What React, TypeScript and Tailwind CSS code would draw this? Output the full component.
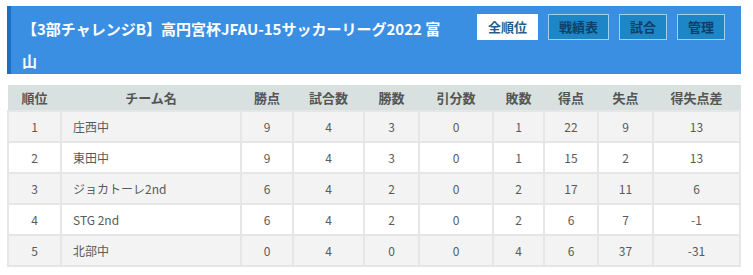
const font = { fontFamily: '"Noto Sans CJK JP", "Noto Sans", sans-serif' };

type Row = {
  rank: number;
  name: string;
  pts: number;
  played: number;
  win: number;
  draw: number;
  lose: number;
  gf: number;
  ga: number;
  diff: number;
};

const rows: Row[] = [
  { rank: 1, name: "庄西中", pts: 9, played: 4, win: 3, draw: 0, lose: 1, gf: 22, ga: 9, diff: 13 },
  { rank: 2, name: "東田中", pts: 9, played: 4, win: 3, draw: 0, lose: 1, gf: 15, ga: 2, diff: 13 },
  { rank: 3, name: "ジョカトーレ2nd", pts: 6, played: 4, win: 2, draw: 0, lose: 2, gf: 17, ga: 11, diff: 6 },
  { rank: 4, name: "STG 2nd", pts: 6, played: 4, win: 2, draw: 0, lose: 2, gf: 6, ga: 7, diff: -1 },
  { rank: 5, name: "北部中", pts: 0, played: 4, win: 0, draw: 0, lose: 4, gf: 6, ga: 37, diff: -31 },
];

const headers = [
  { label: "順位", w: "w-[53px]" },
  { label: "チーム名", w: "w-[180px]" },
  { label: "勝点", w: "w-[52px]" },
  { label: "試合数", w: "w-[71px]" },
  { label: "勝数", w: "w-[55px]" },
  { label: "引分数", w: "w-[74px]" },
  { label: "敗数", w: "w-[51px]" },
  { label: "得点", w: "w-[54px]" },
  { label: "失点", w: "w-[55px]" },
  { label: "得失点差", w: "" },
];

const buttons = ["全順位", "戦績表", "試合", "管理"];

export default function App() {
  return (
    <div className="w-[753px] h-[275px] bg-white pt-[6px]" style={font}>
      <div className="ml-[7px] w-[734px] h-[68px] bg-[#3b8fe3] border-l-[4px] border-[#1c6fc4] flex justify-between pl-[11px] pr-[16px]">
        <h1 className="w-[425px] pt-[7px] text-[15px] leading-[32px] font-bold text-white">
          【3部チャレンジB】高円宮杯JFAU-15サッカーリーグ2022 富山
        </h1>
        <div className="flex gap-[10px] pt-[8px] h-fit">
          {buttons.map((b, i) => (
            <button
              key={b}
              className={
                i === 0
                  ? "h-[26px] px-[10px] text-[13px] font-bold bg-white text-[#1f5f8f] border border-white"
                  : "h-[26px] px-[10px] text-[13px] font-bold bg-[#1d86c6] text-[#0f3f66] border border-[#9fd0ee]"
              }
            >
              {b}
            </button>
          ))}
        </div>
      </div>

      <table className="ml-[7px] mt-[11px] w-[734px] border-collapse text-[12px] text-[#5a5a5a]">
        <thead>
          <tr className="bg-[#d8e1e0] h-[26px]">
            {headers.map((h) => (
              <th
                key={h.label}
                className={`${h.w} text-[13px] font-bold text-[#555] text-center border-x border-[#d8e1e0]`}
              >
                {h.label}
              </th>
            ))}
          </tr>
        </thead>
        <tbody>
          {rows.map((r, i) => (
            <tr
              key={r.rank}
              className={`h-[31px] ${i % 2 === 0 ? "bg-[#f3f3f3]" : "bg-white"}`}
            >
              <td className="border-2 border-[#e6e6e6] text-center">{r.rank}</td>
              <td className="border-2 border-[#e6e6e6] pl-[11px]">{r.name}</td>
              <td className="border-2 border-[#e6e6e6] text-center">{r.pts}</td>
              <td className="border-2 border-[#e6e6e6] text-center">{r.played}</td>
              <td className="border-2 border-[#e6e6e6] text-center">{r.win}</td>
              <td className="border-2 border-[#e6e6e6] text-center">{r.draw}</td>
              <td className="border-2 border-[#e6e6e6] text-center">{r.lose}</td>
              <td className="border-2 border-[#e6e6e6] text-center">{r.gf}</td>
              <td className="border-2 border-[#e6e6e6] text-center">{r.ga}</td>
              <td className="border-2 border-[#e6e6e6] text-center">{r.diff}</td>
            </tr>
          ))}
        </tbody>
      </table>
    </div>
  );
}
